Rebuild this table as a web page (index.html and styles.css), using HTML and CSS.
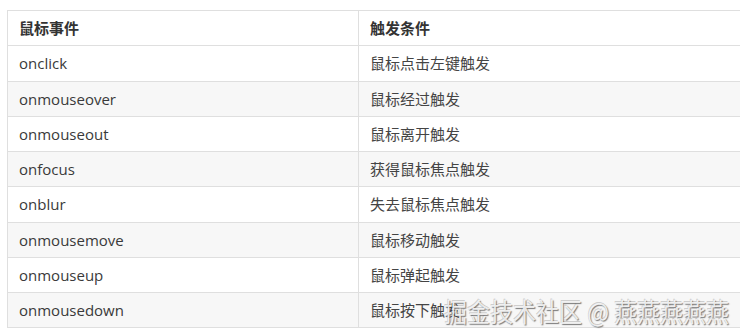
FILE: index.html
```html
<!DOCTYPE html>
<html lang="zh">
<head>
<meta charset="utf-8">
<link rel="stylesheet" href="styles.css">
</head>
<body>
<div class="wrap">
<table class="events">
  <thead>
    <tr><th class="c1">鼠标事件</th><th>触发条件</th></tr>
  </thead>
  <tbody>
    <tr><td class="c1">onclick</td><td>鼠标点击左键触发</td></tr>
    <tr><td class="c1">onmouseover</td><td>鼠标经过触发</td></tr>
    <tr><td class="c1">onmouseout</td><td>鼠标离开触发</td></tr>
    <tr><td class="c1">onfocus</td><td>获得鼠标焦点触发</td></tr>
    <tr><td class="c1">onblur</td><td>失去鼠标焦点触发</td></tr>
    <tr><td class="c1">onmousemove</td><td>鼠标移动触发</td></tr>
    <tr><td class="c1">onmouseup</td><td>鼠标弹起触发</td></tr>
    <tr><td class="c1">onmousedown</td><td>鼠标按下触发</td></tr>
  </tbody>
</table>
<div class="watermark">掘金技术社区 @ 燕燕燕燕燕</div>
</div>
</body>
</html>
```
FILE: styles.css
```css
html, body {
  margin: 0;
  padding: 0;
  background: #fff;
  overflow: hidden;
}
body {
  width: 740px;
  height: 335px;
}
.wrap {
  position: relative;
  padding: 10px 0 0 7px;
  height: 325px;
}
.events {
  border-collapse: collapse;
  width: 760px;
  table-layout: fixed;
  font-family: "Open Sans", "Noto Sans CJK SC", sans-serif;
  font-size: 15px;
  color: #3a3a3a;
}
.events th, .events td {
  border: 1px solid #dfdfdf;
  height: 34.25px;
  padding: 0 11px;
  text-align: left;
  vertical-align: middle;
  line-height: 20px;
}
.events th {
  font-weight: bold;
  font-family: "Noto Sans CJK SC", sans-serif;
  color: #333;
}
.events td:not(.c1) {
  font-family: "Noto Sans CJK SC", sans-serif;
  font-size: 15px;
  color: #444;
}
.events .c1 {
  width: 328px;
}
.events tbody tr:nth-child(even) td {
  background: #f7f7f7;
}
.watermark {
  position: absolute;
  left: 444px;
  top: 292px;
  font-family: "Noto Sans CJK SC", sans-serif;
  font-size: 23px;
  line-height: 32px;
  white-space: nowrap;
  color: rgba(248, 248, 248, 0.9);
  text-shadow: 1px 1px 1px rgba(70, 70, 70, 0.7), -0.5px -0.5px 0 rgba(140,140,140,0.4);
  transform: scaleY(1.15);
  transform-origin: left top;
}
```
